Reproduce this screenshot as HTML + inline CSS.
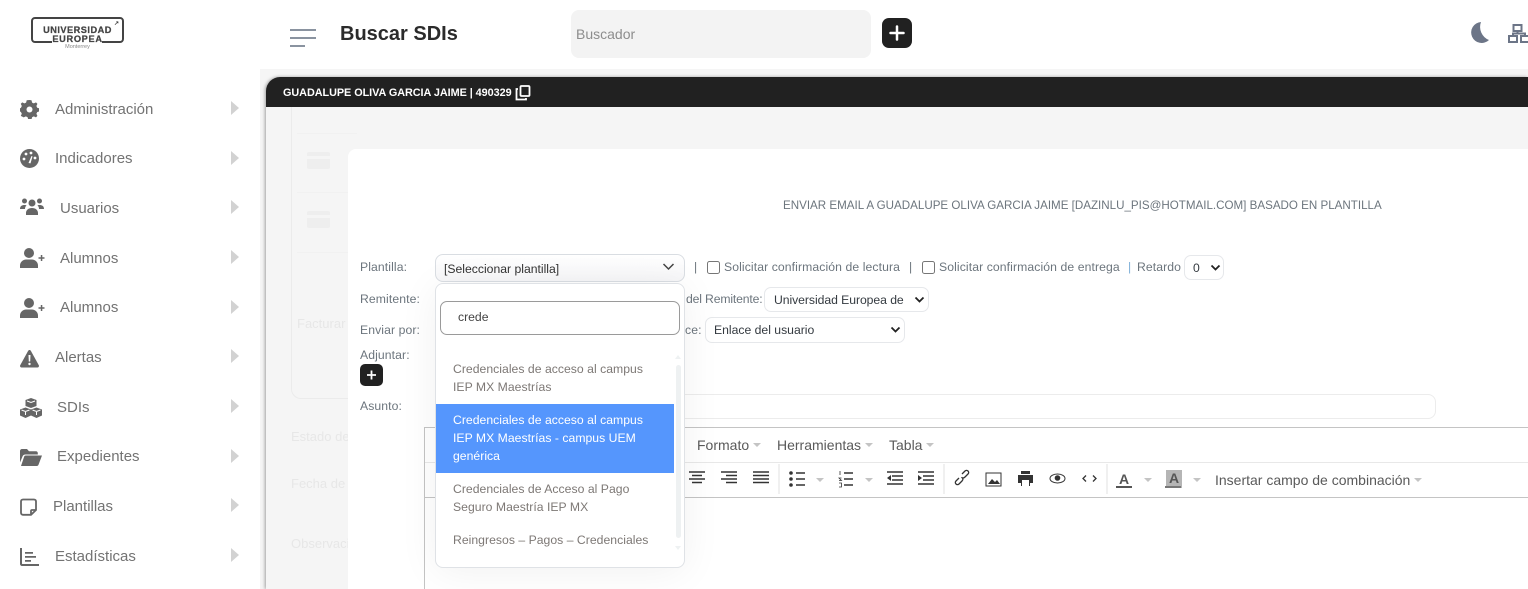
<!DOCTYPE html>
<html lang="es"><head><meta charset="utf-8"><title>Buscar SDIs</title>
<style>
*{box-sizing:border-box}
html,body{margin:0;padding:0;width:1528px;height:589px;overflow:hidden;background:#fff;font-family:"Liberation Sans",sans-serif}
.a{position:absolute;white-space:nowrap}
.nav{font-size:15px;color:#737373;line-height:18px}
.arr{position:absolute;left:231px;width:0;height:0;border-left:8px solid #d2d2d2;border-top:7px solid transparent;border-bottom:7px solid transparent}
.lb{font-size:12.2px;color:#6c757d;line-height:16px;letter-spacing:.1px}
.sel{position:absolute;background:#fff;border:1px solid #e6e8eb;border-radius:7px;font-size:12.2px;color:#343a40;line-height:24px;white-space:nowrap;overflow:hidden}
.chev{position:absolute}
.opt{font-size:12.2px;color:#7d7875;line-height:18px;letter-spacing:.03px}
.m{font-size:14px;color:#5a5a5a;line-height:18px}
.car{position:absolute;width:0;height:0;border-top:4px solid #c4c4c4;border-left:4px solid transparent;border-right:4px solid transparent}
svg{position:absolute;display:block}
</style></head><body>
<div class="a" style="left:0;top:0;width:1528px;height:69px;background:#fff"></div>
<div class="a" style="left:260px;top:69px;width:1268px;height:520px;background:#f5f5f5"></div>

<!-- logo -->
<div class="a" style="left:31px;top:17px;width:93px;height:26px;border:2px solid #444;border-radius:4px"></div>
<div class="a" style="left:52px;top:38px;width:50px;height:7px;background:#fff"></div>
<div class="a" style="left:31px;top:25px;width:93px;text-align:center;font:bold 9.2px/11px 'Liberation Sans',sans-serif;color:#444;letter-spacing:.5px;-webkit-text-stroke:.25px #444">UNIVERSIDAD</div>
<div class="a" style="left:31px;top:34px;width:93px;text-align:center;font:bold 9.2px/11px 'Liberation Sans',sans-serif;color:#444;letter-spacing:.7px;-webkit-text-stroke:.25px #444">EUROPEA</div>
<div class="a" style="left:31px;top:44px;width:93px;text-align:center;font:5.5px/7px 'Liberation Sans',sans-serif;color:#888">Monterrey</div>
<div class="a" style="left:114px;top:21px;font:bold 6px/7px 'Liberation Sans',sans-serif;color:#444">↗</div>

<!-- top bar -->
<div class="a" style="left:290px;top:29px;width:26px;height:2px;background:#8a93a0"></div>
<div class="a" style="left:290px;top:37px;width:26px;height:2px;background:#8a93a0"></div>
<div class="a" style="left:290px;top:45px;width:15px;height:2px;background:#8a93a0"></div>
<div class="a" style="left:340px;top:21px;font:bold 20px/26px 'Liberation Sans',sans-serif;color:#2b2b2b">Buscar SDIs</div>
<div class="a" style="left:571px;top:10px;width:300px;height:48px;background:#f3f3f3;border-radius:8px"></div>
<div class="a" style="left:576px;top:25px;font-size:14px;line-height:18px;color:#8d8d8d">Buscador</div>
<div class="a" style="left:882px;top:18px;width:30px;height:30px;background:#212121;border-radius:7px"></div>
<svg style="left:882px;top:18px" width="30" height="30" viewBox="0 0 30 30"><path d="M15 8.500v13M8.500 15h13" stroke="#fff" stroke-width="2.500" stroke-linecap="round"/></svg>
<svg style="left:1469px;top:22px" width="22" height="23" viewBox="0 0 22 23"><path d="M12 0A10.500 10.500 0 1 0 20 18A14 14 0 0 1 12 0z" fill="#6c7587"/></svg>
<svg style="left:1508px;top:23px" width="20" height="20" viewBox="0 0 20 20" fill="none" stroke="#6c7587" stroke-width="2"><rect x="5.500" y="2" width="8" height="6"/><rect x="1" y="13" width="8" height="6"/><rect x="13" y="13" width="8" height="6"/><path d="M9.500 8v2.500M5 13v-2.500h12V13"/></svg>

<!-- sidebar -->
<svg style="left:20px;top:100px" width="19" height="19" viewBox="0 0 19 19"><path d="M9.500 0l2 .3.6 2.300 1.700.8 2.200-1 1.400 1.500-1 2.100.8 1.700 2.200.7v3l-2.200.7-.8 1.700 1 2.100-1.400 1.500-2.200-1-1.700.8-.6 2.300h-3.300l-.6-2.300-1.700-.8-2.200 1L.8 15.900l1-2.100L1 12.100l-1-.7v-3l1-.7.800-1.700-1-2.100L2.200 2.400l2.200 1 1.700-.8.600-2.300z" fill="#666"/><circle cx="9.500" cy="9.500" r="3" fill="#fff"/></svg>
<div class="a nav" style="left:55px;top:101px">Administración</div><div class="arr" style="top:101px"></div>
<svg style="left:20px;top:149px" width="19" height="19" viewBox="0 0 19 19"><circle cx="9.500" cy="9.500" r="9.500" fill="#666"/><circle cx="4" cy="10" r="1.400" fill="#fff"/><circle cx="6" cy="5" r="1.400" fill="#fff"/><circle cx="11" cy="4" r="1.400" fill="#fff"/><circle cx="15" cy="9" r="1.400" fill="#fff"/><path d="M8.500 14l3-7 1 .4-2 7z" fill="#fff"/></svg>
<div class="a nav" style="left:55px;top:150px">Indicadores</div><div class="arr" style="top:151px"></div>
<svg style="left:20px;top:198px" width="24" height="20" viewBox="0 0 24 20" fill="#666"><circle cx="4.500" cy="3" r="2.500"/><circle cx="19.500" cy="3" r="2.500"/><circle cx="12" cy="5" r="3.500"/><path d="M0 11c0-3 2-4 4.500-4 1 0 1.600.2 2 .5-1 .8-1.500 2-1.500 3.500zM24 11c0-3-2-4-4.500-4-1 0-1.600.2-2 .5 1 .8 1.500 2 1.500 3.500zM6 15c0-3 2.500-5 6-5s6 2 6 5v2H6z"/></svg>
<div class="a nav" style="left:60px;top:200px">Usuarios</div><div class="arr" style="top:200px"></div>
<svg style="left:20px;top:248px" width="25" height="20" viewBox="0 0 25 20" fill="#666"><circle cx="9" cy="5" r="5"/><path d="M0 20v-2.500C0 14 3 11.500 6 11.500h6c3 0 6 2.500 6 6V20z"/><path d="M18.500 9.300h6v1.500h-6zM20.800 7h1.500v6h-1.500z"/></svg>
<div class="a nav" style="left:60px;top:250px">Alumnos</div><div class="arr" style="top:250px"></div>
<svg style="left:20px;top:298px" width="25" height="20" viewBox="0 0 25 20" fill="#666"><circle cx="9" cy="5" r="5"/><path d="M0 20v-2.500C0 14 3 11.500 6 11.500h6c3 0 6 2.500 6 6V20z"/><path d="M18.500 9.300h6v1.500h-6zM20.800 7h1.500v6h-1.500z"/></svg>
<div class="a nav" style="left:60px;top:299px">Alumnos</div><div class="arr" style="top:300px"></div>
<svg style="left:20px;top:350px" width="19" height="18" viewBox="0 0 19 18"><path d="M9.500 0c.6 0 1 .3 1.300.8l8 14.500c.5 1-.1 2.200-1.300 2.200h-16C.300 17.500-.3 16.300.2 15.300l8-14.500C8.500.3 8.900 0 9.500 0z" fill="#666"/><path d="M8.500 5h2l-.3 6.500H8.800z" fill="#fff"/><circle cx="9.500" cy="14" r="1.200" fill="#fff"/></svg>
<div class="a nav" style="left:55px;top:349px">Alertas</div><div class="arr" style="top:349px"></div>
<svg style="left:20px;top:398px" width="22" height="20" viewBox="0 0 22 20" fill="#666"><path d="M11 0l5.500 2v6L11 10 5.500 8V2z"/><path d="M5.500 9.500L11 11.500v6L5.500 20 0 17.500v-6zM16.500 9.500L22 11.500v6L16.500 20 11 17.500v-6z"/><path d="M7 3l4 1.500L15 3M1.500 12l4 1.500 4-1.500M12.500 12l4 1.500 4-1.500M5.500 14v3M16.500 14v3" stroke="#fff" stroke-width="1" fill="none"/></svg>
<div class="a nav" style="left:57px;top:399px">SDIs</div><div class="arr" style="top:399px"></div>
<svg style="left:20px;top:449px" width="22" height="17" viewBox="0 0 22 17" fill="#666"><path d="M0 2C0 1 .800 0 2 0h5l2 2.200h7c1 0 1.800.8 1.800 1.800v1.500H5.500C4 5.500 3 6.300 2.500 7.500L0 13.500z"/><path d="M1 17l3.200-9.500c.2-.6.800-1 1.500-1H22l-3.500 9.300c-.3.700-.9 1.200-1.600 1.200z"/></svg>
<div class="a nav" style="left:57px;top:448px">Expedientes</div><div class="arr" style="top:449px"></div>
<svg style="left:20px;top:498px" width="17" height="18" viewBox="0 0 17 18" fill="none" stroke="#666" stroke-width="1.800"><path d="M11 16.800H3c-1.200 0-2-.8-2-2V3.500c0-1.200.8-2 2-2h11c1.200 0 2 .8 2 2V12z"/><path d="M11 16.800V13c0-.6.400-1 1-1h4" /></svg>
<div class="a nav" style="left:53px;top:498px">Plantillas</div><div class="arr" style="top:498px"></div>
<svg style="left:20px;top:548px" width="19" height="18" viewBox="0 0 19 18" fill="#666"><path d="M0 0h2v15.500c0 .3.200.5.500.5H19v2H2c-1.100 0-2-.9-2-2z"/><path d="M5 4h8v1.800H5zM5 8h11v1.800H5zM5 12h6v1.800H5z"/></svg>
<div class="a nav" style="left:55px;top:548px">Estadísticas</div><div class="arr" style="top:548px"></div>

<!-- modal shell -->
<div class="a" style="left:266px;top:77px;width:1262px;height:512px;background:#f5f5f5;border-radius:14px 0 0 0;box-shadow:-1px 0 3px rgba(0,0,0,.35)"></div>
<div class="a" style="left:266px;top:77px;width:1262px;height:30px;background:#212121;border-radius:14px 0 0 0"></div>
<div class="a" style="left:283px;top:86px;font:bold 10.850px/15px 'Liberation Sans',sans-serif;color:#fff;letter-spacing:-.05px">GUADALUPE OLIVA GARCIA JAIME | 490329</div>
<svg style="left:515px;top:85px" width="17" height="16" viewBox="0 0 17 16" fill="none" stroke="#fff" stroke-width="1.800"><rect x="5.500" y="1" width="9" height="10" rx="1"/><path d="M3 4H1.500v10.500H11V13"/></svg>

<!-- faded background -->
<div class="a" style="left:291px;top:107px;width:1237px;height:292px;border:1px solid #ebebeb;border-top:0;border-right:0;border-radius:0 0 0 10px"></div>
<div class="a" style="left:297px;top:133px;width:60px;height:1px;background:#f1f1f1"></div>
<div class="a" style="left:297px;top:192px;width:60px;height:1px;background:#f1f1f1"></div>
<div class="a" style="left:297px;top:252px;width:60px;height:1px;background:#f1f1f1"></div>
<div class="a" style="left:307px;top:152px;width:23px;height:17px;background:#eeeeee;border-radius:2px"></div>
<div class="a" style="left:307px;top:156px;width:23px;height:3px;background:#f5f5f5"></div>
<div class="a" style="left:307px;top:211px;width:23px;height:17px;background:#eeeeee;border-radius:2px"></div>
<div class="a" style="left:307px;top:215px;width:23px;height:3px;background:#f5f5f5"></div>
<div class="a" style="left:297px;top:316px;font-size:13px;line-height:16px;color:#e7e7e7">Facturar</div>
<div class="a" style="left:291px;top:429px;font-size:13px;line-height:16px;color:#e7e7e7">Estado de</div>
<div class="a" style="left:291px;top:476px;font-size:13px;line-height:16px;color:#e7e7e7">Fecha de</div>
<div class="a" style="left:291px;top:536px;font-size:13px;line-height:16px;color:#e7e7e7">Observaciones</div>

<!-- email panel -->
<div class="a" style="left:348px;top:149px;width:1180px;height:440px;background:#fff;border-radius:8px 0 0 0"></div>
<div class="a" style="left:783px;top:198px;font-size:11.600px;line-height:16px;color:#6c757d">ENVIAR EMAIL A GUADALUPE OLIVA GARCIA JAIME [DAZINLU_PIS@HOTMAIL.COM] BASADO EN PLANTILLA</div>

<div class="a lb" style="left:360px;top:259px">Plantilla:</div>
<div class="a lb" style="left:360px;top:291px">Remitente:</div>
<div class="a lb" style="left:360px;top:322px">Enviar por:</div>
<div class="a lb" style="left:360px;top:347px">Adjuntar:</div>
<div class="a" style="left:360px;top:364px;width:23px;height:22px;background:#212121;border-radius:5px"></div>
<svg style="left:360px;top:364px" width="23" height="22" viewBox="0 0 23 22"><path d="M11.500 6.500v9M7 11h9" stroke="#fff" stroke-width="1.800"/></svg>
<div class="a lb" style="left:360px;top:398px">Asunto:</div>

<div class="a lb" style="left:694px;top:259px">|</div>
<div class="a" style="left:707px;top:261px;width:13px;height:13px;border:1px solid #767676;border-radius:2.500px;background:#fff"></div>
<div class="a lb" style="left:724px;top:259px">Solicitar confirmación de lectura</div>
<div class="a lb" style="left:909px;top:259px">|</div>
<div class="a" style="left:922px;top:261px;width:13px;height:13px;border:1px solid #767676;border-radius:2.500px;background:#fff"></div>
<div class="a lb" style="left:939px;top:259px">Solicitar confirmación de entrega</div>
<div class="a lb" style="left:1128px;top:259px;color:#7fb0d8">|</div>
<div class="a lb" style="left:1137px;top:259px">Retardo</div>
<div class="sel" style="left:1184px;top:255px;width:40px;height:25px;padding-left:8px">0</div>
<svg class="chev" style="left:1210px;top:264px" width="11" height="8" viewBox="0 0 11 8"><path d="M1.500 1.500l4 4 4-4" fill="none" stroke="#222" stroke-width="1.800"/></svg>
<div class="a lb" style="left:686px;top:291px;letter-spacing:-.15px">del Remitente:</div>
<div class="sel" style="left:764px;top:287px;width:165px;height:25px;padding-left:9px"><span style="display:inline-block;width:134px;overflow:hidden;vertical-align:top;letter-spacing:-.05px">Universidad Europea de México</span></div>
<svg class="chev" style="left:914px;top:296px" width="11" height="8" viewBox="0 0 11 8"><path d="M1.500 1.500l4 4 4-4" fill="none" stroke="#222" stroke-width="1.800"/></svg>
<div class="a lb" style="left:685px;top:322px">ce:</div>
<div class="sel" style="left:705px;top:317px;width:200px;height:26px;padding-left:8px">Enlace del usuario</div>
<svg class="chev" style="left:890px;top:326px" width="11" height="8" viewBox="0 0 11 8"><path d="M1.500 1.500l4 4 4-4" fill="none" stroke="#222" stroke-width="1.800"/></svg>
<div class="a" style="left:660px;top:394px;width:776px;height:25px;border:1px solid #ececec;border-radius:8px;background:#fff"></div>

<!-- editor -->
<div class="a" style="left:424px;top:427px;width:1104px;height:162px;border-top:1px solid #c4c4c4;border-left:1px solid #c4c4c4;background:#fff"></div>
<div class="a" style="left:425px;top:462px;width:1103px;height:1px;background:#e8e8e8"></div>
<div class="a" style="left:425px;top:497px;width:1103px;height:1px;background:#c4c4c4"></div>
<div class="a m" style="left:697px;top:436px">Formato</div><div class="car" style="left:753px;top:443px"></div>
<div class="a m" style="left:777px;top:436px">Herramientas</div><div class="car" style="left:865px;top:443px"></div>
<div class="a m" style="left:889px;top:436px">Tabla</div><div class="car" style="left:926px;top:443px"></div>

<svg style="left:680px;top:462px" width="500" height="36" viewBox="0 0 500 36" fill="none" stroke="#333">
<path d="M9 10h16M12 13.500h10M9 17h16M12 20.500h10" stroke-width="1.600"/>
<path d="M41 10h16M46 13.500h11M41 17h16M46 20.500h11" stroke-width="1.600"/>
<path d="M73 10h16M73 13.500h16M73 17h16M73 20.500h16" stroke-width="1.600"/>
<path d="M99 2v30M264 2v30" stroke="#e2e2e2" stroke-width="1"/>
<circle cx="111" cy="11" r="1.800" fill="#333" stroke="none"/><circle cx="111" cy="17" r="1.800" fill="#333" stroke="none"/><circle cx="111" cy="23" r="1.800" fill="#333" stroke="none"/>
<path d="M116 11h9M116 17h9M116 23h9" stroke-width="1.500"/>
<path d="M164 11h9M164 17h9M164 23h9" stroke-width="1.500"/>
<path d="M160 9v4M161.500 16h-2.500l2.500 2.500h-2.500M159 21h2.500v4H159" stroke-width=".8"/>
<path d="M207 10h16M212 14h11M212 18h11M207 22h16" stroke-width="1.500"/><path d="M211 13v6l-4-3z" fill="#333" stroke="none"/>
<path d="M238 10h16M243 14h11M243 18h11M238 22h16" stroke-width="1.500"/><path d="M238 13v6l4-3z" fill="#333" stroke="none"/>
<path d="M282 12l3-3c2-2 5 1 3 3l-3 3c-1.500 1.500-3 1-3.500.2M279 16l-3 3c-2 2 1 5 3 3l3-3c1.500-1.500 1-3-.2-3.500" stroke-width="1.300"/>
<rect x="306" y="11" width="15" height="13" stroke-width="1"/><path d="M308 22l4-5 3 3 2-2 3 4z" fill="#333" stroke="none"/>
<path d="M338 13h15v8h-3v3h-9v-3h-3z" fill="#333" stroke="none"/><rect x="341" y="9" width="9" height="3" fill="#333" stroke="none"/><rect x="342" y="18" width="7" height="6" fill="#fff" stroke="none"/>
<ellipse cx="377.500" cy="16.500" rx="7.500" ry="4.500" stroke-width="1"/><circle cx="377.500" cy="16" r="2.800" fill="#333" stroke="none"/>
<path d="M406 13.500l-3 3 3 3M413 13.500l3 3-3 3" stroke-width="1.300"/>
<path d="M427 2v30" stroke="#e2e2e2" stroke-width="1"/>
</svg>
<div class="car" style="left:816px;top:478px"></div><div class="car" style="left:865px;top:478px"></div>
<div class="a" style="left:1119px;top:472px;font:bold 14px/15px 'Liberation Sans',sans-serif;color:#555">A</div>
<div class="a" style="left:1116px;top:486px;width:16px;height:2px;background:#555"></div>
<div class="car" style="left:1144px;top:478px"></div>
<div class="a" style="left:1166px;top:470px;width:16px;height:18px;background:#b5b5b5"></div>
<div class="a" style="left:1169px;top:471px;font:bold 14px/15px 'Liberation Sans',sans-serif;color:#555">A</div>
<div class="a" style="left:1165px;top:486px;width:16px;height:2px;background:#777"></div>
<div class="car" style="left:1193px;top:478px"></div>
<div class="a m" style="left:1215px;top:471px">Insertar campo de combinación</div><div class="car" style="left:1414px;top:478px"></div>

<!-- select2 -->
<div class="a" style="left:435px;top:254px;width:250px;height:28px;background:linear-gradient(#fff,#f6f6f8);border:1px solid #d9dde2;border-radius:8px"></div>
<div class="a" style="left:444px;top:261px;font-size:12.2px;line-height:17px;color:#333">[Seleccionar plantilla]</div>
<svg style="left:662px;top:263px" width="13" height="8" viewBox="0 0 13 8"><path d="M1.500 1l5 5 5-5" fill="none" stroke="#444" stroke-width="1.500"/></svg>
<div class="a" style="left:435px;top:283px;width:250px;height:285px;background:#fff;border:1px solid #dfe2e6;border-radius:8px;box-shadow:0 4px 40px rgba(0,0,0,.06)"></div>
<div class="a" style="left:440px;top:301px;width:240px;height:34px;border:1px solid #9a9a9a;border-radius:7px;background:#fff"></div>
<div class="a" style="left:458px;top:309px;font-size:12.2px;line-height:17px;color:#444">crede</div>
<div class="a opt" style="left:453px;top:360px">Credenciales de acceso al campus<br>IEP MX Maestrías</div>
<div class="a" style="left:436px;top:404px;width:238px;height:69px;background:#5596fd"></div>
<div class="a opt" style="left:453px;top:411px;color:#fff">Credenciales de acceso al campus<br>IEP MX Maestrías - campus UEM<br>genérica</div>
<div class="a opt" style="left:453px;top:480px">Credenciales de Acceso al Pago<br>Seguro Maestría IEP MX</div>
<div class="a opt" style="left:453px;top:531px">Reingresos – Pagos – Credenciales</div>
<div class="a" style="left:676px;top:365px;width:5px;height:173px;background:#eef1f2;border-radius:3px"></div>
<div class="a" style="left:675px;top:355px;width:0;height:0;border-bottom:4px solid #eef1f2;border-left:3px solid transparent;border-right:3px solid transparent"></div>
<div class="a" style="left:675px;top:546px;width:0;height:0;border-top:4px solid #eef1f2;border-left:3px solid transparent;border-right:3px solid transparent"></div>
</body></html>
